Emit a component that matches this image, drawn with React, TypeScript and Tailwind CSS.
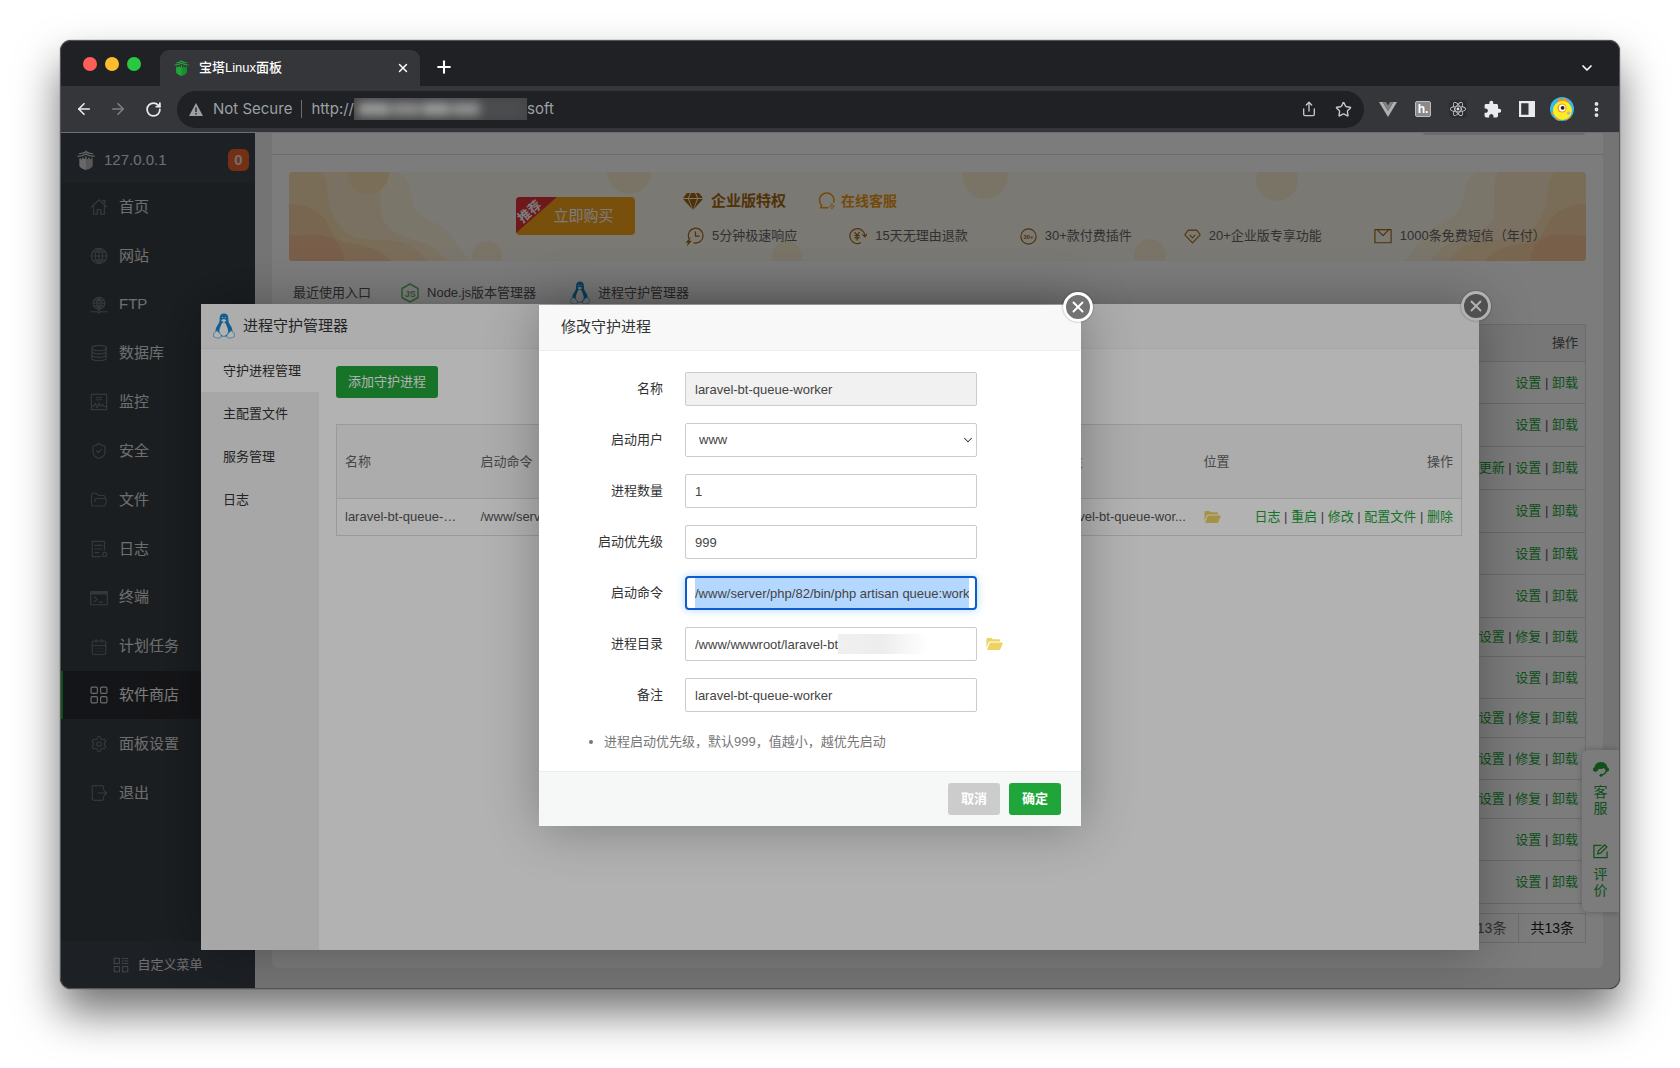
import React from "react";
import {
  ArrowLeft,
  ArrowRight,
  CalendarDays,
  ChevronDown,
  EllipsisVertical,
  FolderOpen,
  Plus,
  RotateCw,
  Settings,
  Share,
  ShieldCheck,
  Star,
  X,
} from "lucide-react";
import { MdExtension } from "react-icons/md";
import { FaReact } from "react-icons/fa";

type IconProps = { className?: string };

function PagodaIcon({ className }: IconProps) {
  return (
    <svg viewBox="0 0 20 22" className={className} fill="currentColor" aria-hidden="true">
      <path d="M10 0l.7 1.2C12.300 2.300 15 3.200 18 3.400v1.100C14.500 4.400 12 3.600 10 2.600 8 3.600 5.500 4.400 2 4.500V3.400C5 3.200 7.700 2.300 9.300 1.200z" />
      <path d="M10 3.600c2.600 1.500 5.600 2.500 9.700 2.700v1.200C15.500 7.300 12.500 6.400 10 5.100 7.500 6.400 4.500 7.300.300 7.500V6.300C4.400 6.100 7.400 5.100 10 3.600z" />
      <path d="M2.600 9h1.800v1.200h1.400V8.600h2v1.200h1.300V7.400l.9-.7.9.7v2.400h1.300V8.600h2v1.600h1.400V9h1.800v8c0 2-3.500 4-7.400 5-3.900-1-7.400-3-7.400-5z" />
      <path d="M10 8v14c3.900-1 7.400-3 7.400-5V9.500z" fill="#000" opacity=".14" />
    </svg>
  );
}

function PenguinIcon({ className }: IconProps) {
  return (
    <svg viewBox="0 0 22 26" className={className} aria-hidden="true">
      <path
        d="M11 .4c-2.900 0-4.300 2-4.300 4.700 0 2.500.1 3.800-1.500 6.200C3.600 13.600 2.300 16 2.500 19l4 4.500h9l4-4.500c.2-3-1.200-5.400-2.800-7.700-1.400-2.200-1.400-3.700-1.400-6.200 0-2.700-1.400-4.700-4.300-4.700z"
        fill="#1789cc"
      />
      <path
        d="M10.700 9.200c-1.500 0-2 1.400-2.800 3.300-.8 2-1.700 3.900-1.600 6.100.1 2.500 2 4.400 4.500 4.400s4.200-2 4.300-4.400c.1-2.200-.8-4.100-1.600-6.100-.7-1.800-1.200-3.300-2.800-3.300z"
        fill="#fff"
      />
      <path d="M8.200 7.100l2.700-1 2.400 1-.7 1.300-1.700.7-1.900-.8z" fill="#fff" />
      <circle cx="9.500" cy="4.600" r=".6" fill="#fff" />
      <circle cx="12.300" cy="4.600" r=".6" fill="#fff" />
      <path
        d="M4 17.600l3.600 3.600c1.200 1.400.6 3.600-1.400 3.900-2 .2-3.600-.8-5.300-1.200-.6-.3-.4-1.100-.2-1.900.1-1-.3-1.700.4-2.100 1.200-.5 1.600-1.600 2.900-2.300zM18 17.600l-3.600 3.600c-1.200 1.400-.6 3.600 1.400 3.900 2 .2 3.600-.8 5.300-1.200.6-.3.400-1.100.2-1.900-.1-1 .3-1.700-.4-2.100-1.200-.5-1.600-1.600-2.900-2.300z"
        fill="#fff"
        stroke="#1789cc"
        strokeWidth=".6"
      />
    </svg>
  );
}

function FolderIcon({ className }: IconProps) {
  return (
    <svg viewBox="0 0 17 14" className={className} fill="#eed262" aria-hidden="true">
      <path d="M.5 2.200C.5 1.500 1 1 1.700 1h3.600l1.400 1.300h6.100c.7 0 1.200.5 1.200 1.100v1H4.300c-.8 0-1.400.4-1.700 1.100L.5 11z" />
      <path d="M3.600 6.200c.2-.5.500-.8 1.100-.8h11.500c.4 0 .7.400.5.900l-2.400 6c-.2.500-.5.700-1 .7H1.600c-.4 0-.6-.3-.4-.8z" />
    </svg>
  );
}

function Line({ className, children }: IconProps & { children: React.ReactNode }) {
  return (
    <svg
      viewBox="0 0 20 20"
      className={className}
      fill="none"
      stroke="currentColor"
      strokeWidth="1.3"
      strokeLinecap="round"
      strokeLinejoin="round"
      aria-hidden="true"
    >
      {children}
    </svg>
  );
}

const icon = "size-[18px]";

const menu: { label: string; icon: React.ReactNode; active?: boolean }[] = [
  {
    label: "首页",
    icon: (
      <Line className={icon}>
        <path d="M1.500 10L10 2l8.500 8M4 8.500V18h4v-5h4v5h4V8.500M14 3h2.500v3" />
      </Line>
    ),
  },
  {
    label: "网站",
    icon: (
      <Line className={icon}>
        <circle cx="10" cy="10" r="8.500" />
        <path d="M10 1.500v17M1.500 10h17M3 5.500h14M3 14.500h14M10 1.500c-5.500 4-5.500 13 0 17 5.500-4 5.500-13 0-17z" />
      </Line>
    ),
  },
  {
    label: "FTP",
    icon: (
      <Line className={icon}>
        <circle cx="10" cy="8" r="6.500" />
        <path d="M10 1.500c-4 3.500-4 9.500 0 13 4-3.500 4-9.500 0-13zM10 1.500v13M3.500 8h13M4.500 5h11M4.500 11h11M.8 17.500h7M12.200 17.500h7" />
        <circle cx="10" cy="17.300" r="1.500" />
      </Line>
    ),
  },
  {
    label: "数据库",
    icon: (
      <Line className={icon}>
        <ellipse cx="10" cy="4.500" rx="8" ry="3" />
        <path d="M2 4.500v11c0 1.700 3.600 3 8 3s8-1.300 8-3v-11M2 8c0 1.700 3.600 3 8 3s8-1.300 8-3M2 11.800c0 1.700 3.600 3 8 3s8-1.300 8-3" />
      </Line>
    ),
  },
  {
    label: "监控",
    icon: (
      <Line className={icon}>
        <path d="M1.500 1.500h17v17h-17zM7 5h6M7 7.500h6M2 14.500h2.500l1.500-3 2 5 2-5.500 1.500 3.500h1l1.500-2 1.500 2.500H18" />
      </Line>
    ),
  },
  { label: "安全", icon: <ShieldCheck className={icon} strokeWidth={1.6} /> },
  { label: "文件", icon: <FolderOpen className={icon} strokeWidth={1.5} /> },
  {
    label: "日志",
    icon: (
      <Line className={icon}>
        <path d="M16 11V1.500H2.500v17H12M5.500 6h7.500M5.500 10h7.500M5.500 14H10" />
        <circle cx="16.300" cy="16" r="2.300" />
      </Line>
    ),
  },
  {
    label: "终端",
    icon: (
      <Line className={icon}>
        <path d="M.8 3h18.400v14.500H.8zM.8 4.200h18.400M.8 5.500h18.400M5 9l3 2.500L5 14M10 14.500h4" />
      </Line>
    ),
  },
  { label: "计划任务", icon: <CalendarDays className={icon} strokeWidth={1.5} /> },
  {
    label: "软件商店",
    active: true,
    icon: (
      <Line className={icon}>
        <rect x="1.200" y="1.200" width="7" height="7" rx="1.200" />
        <rect x="11.800" y="1.200" width="7" height="7" rx="1.200" />
        <rect x="1.200" y="11.800" width="7" height="7" rx="1.200" />
        <rect x="11.800" y="11.800" width="7" height="7" rx="1.200" />
      </Line>
    ),
  },
  { label: "面板设置", icon: <Settings className={icon} strokeWidth={1.5} /> },
  {
    label: "退出",
    icon: (
      <Line className={icon}>
        <path d="M15 6V3.500C15 2.500 14 1.800 13 1.800H4.500c-1 0-2 .7-2 1.700v13c0 1 1 1.700 2 1.700H13c1 0 2-.7 2-1.700V14M9.500 10h9M16 7.500l2.500 2.500-2.500 2.500" />
      </Line>
    ),
  },
];

function TabStrip() {
  return (
    <div className="flex h-[45px] items-end bg-[#202124]">
      <div className="flex h-full w-[99px] items-center gap-2 pl-[22px]">
        <button aria-label="关闭窗口" className="size-[14px] rounded-full bg-[#ff5f57]" />
        <button aria-label="最小化" className="size-[14px] rounded-full bg-[#febc2e]" />
        <button aria-label="最大化" className="size-[14px] rounded-full bg-[#28c840]" />
      </div>
      <div className="flex h-9 w-[260px] items-center rounded-t-[9px] bg-[#35363a] pr-[10px] pl-[14px]">
        <PagodaIcon className="h-4 w-[15px] text-[#20a53a]" />
        <span className="ml-[10px] flex-1 text-[13px] font-medium text-white">宝塔Linux面板</span>
        <button aria-label="关闭标签页" className="text-white">
          <X className="size-[14px]" strokeWidth={2.5} />
        </button>
      </div>
      <button aria-label="新标签页" className="mb-[9px] ml-[14px] text-white">
        <Plus className="size-5" strokeWidth={2.5} />
      </button>
      <button aria-label="搜索标签页" className="mr-6 mb-[10px] ml-auto text-white">
        <ChevronDown className="size-4" strokeWidth={2.5} />
      </button>
    </div>
  );
}

function Toolbar() {
  return (
    <div className="flex h-[47px] items-center border-b border-[#6d6e70] bg-[#35363a] pl-[14px] text-[#e8eaed]">
      <button aria-label="后退">
        <ArrowLeft className="size-[18px]" strokeWidth={2.2} />
      </button>
      <button aria-label="前进" className="ml-4 text-[#7d7e81]">
        <ArrowRight className="size-[18px]" strokeWidth={2.2} />
      </button>
      <button aria-label="重新加载" className="ml-[18px]">
        <RotateCw className="size-[17px]" strokeWidth={2.5} />
      </button>
      <div className="ml-[15px] flex h-[37px] flex-1 items-center rounded-full bg-[#202124] px-3 font-[Inter,'Noto_Sans_CJK_SC',sans-serif] text-[15px] text-[#9aa0a6]">
        <svg viewBox="0 0 14 13" className="h-[13px] w-[14px]" aria-hidden="true">
          <path d="M7 0l7 13H0z" fill="#9aa0a6" />
          <path d="M6.300 4.500h1.400V9H6.300zM6.300 10h1.400v1.400H6.300z" fill="#202124" />
        </svg>
        <span className="ml-[10px]">Not Secure</span>
        <span className="mx-[9px] h-[18px] w-px bg-[#6b6d70]" />
        <span>http://</span>
        <span className="h-[22px] w-[173px] overflow-hidden bg-[#454648]">
          <span className="flex h-full items-center gap-0.5 blur-[5px]">
            <span className="ml-1 h-[14px] w-8 bg-[#999999]" />
            <span className="h-[14px] w-7 bg-[#8a8a8a]" />
            <span className="h-[14px] w-7 bg-[#999999]" />
            <span className="h-[14px] w-7 bg-[#8f8f8f]" />
            <span className="h-[14px] w-10 bg-[#4c4e4f]" />
          </span>
        </span>
        <span className="flex-1">soft</span>
        <button aria-label="分享" className="text-[#c4c7c5]">
          <Share className="size-4" />
        </button>
        <button aria-label="收藏" className="ml-[18px] text-[#c4c7c5]">
          <Star className="size-[17px]" />
        </button>
      </div>
      <div className="flex items-center pr-[13px]">
        <button aria-label="Vue" className="ml-[15px]">
          <svg viewBox="0 0 18 15" className="h-[15px] w-[18px]" aria-hidden="true">
            <path d="M0 0h3.600L9 9l5.400-9H18L9 15z" fill="#b0b0b0" />
            <path d="M3.600 0H7l2 3.400L11 0h3.400L9 9z" fill="#808080" />
          </svg>
        </button>
        <button
          aria-label="h."
          className="ml-[18px] flex size-4 items-center justify-center rounded-xs border border-[#bbbbbb] bg-[#8a8a8a] text-xs font-bold text-white"
        >
          h.
        </button>
        <button aria-label="React" className="ml-[18px] rounded-sm bg-[#2c2d30] p-px text-[#e0e0e0]">
          <FaReact className="size-4" />
        </button>
        <button aria-label="扩展程序" className="ml-4">
          <MdExtension className="size-[19px]" />
        </button>
        <button aria-label="侧边栏" className="ml-[17px]">
          <svg viewBox="0 0 16 16" className="size-4" aria-hidden="true">
            <path d="M0 0h16v16H0zM2.200 2.200v11.600h7.300V2.200z" fill="#e8eaed" fillRule="evenodd" />
          </svg>
        </button>
        <button aria-label="个人资料" className="ml-[15px]">
          <svg viewBox="0 0 24 24" className="size-6" aria-hidden="true">
            <clipPath id="avatar">
              <circle cx="12" cy="12" r="12" />
            </clipPath>
            <g clipPath="url(#avatar)">
              <path d="M0 0h24v24H0z" fill="#35b8ea" />
              <path d="M8 4l1-3 3 2 3-2.500L17 4l3 1-2 3H7zM1 17l3-5 3 6z" fill="#f7931e" />
              <ellipse cx="12.500" cy="13.500" rx="9.500" ry="9.500" fill="#fcee21" />
              <path d="M7 20l3 4H4zM18 21l3-2-1 5h-5z" fill="#f7931e" />
              <circle cx="12" cy="11" r="4.600" fill="#f7931e" />
              <circle cx="12.200" cy="11" r="3.400" fill="#fff" />
              <circle cx="12.600" cy="10.800" r="1.900" fill="#222" />
              <circle cx="18.500" cy="16" r="1.800" fill="#b8bfa0" />
            </g>
          </svg>
        </button>
        <button aria-label="更多" className="ml-[13px]">
          <EllipsisVertical className="size-[19px]" strokeWidth={2.8} />
        </button>
      </div>
    </div>
  );
}

function Sidebar() {
  return (
    <aside className="flex w-[194px] shrink-0 flex-col bg-[#383f44] text-[#e3e3e3]">
      <div className="flex h-[50px] items-center bg-[#3d444d] pr-[6px] pl-4 text-[15px]">
        <PagodaIcon className="mt-1 h-[22px] w-[18px] text-[#d6d6d6]" />
        <span className="ml-[9px] flex-1 pt-1">127.0.0.1</span>
        <span className="mt-1 flex h-[22px] w-[21px] items-center justify-center rounded-md bg-[#f0642a] font-bold">0</span>
      </div>
      <nav className="grid h-[634px] auto-rows-fr gap-px text-[15px]">
        {menu.map((item) => (
          <a
            key={item.label}
            href="#"
            className={
              item.active
                ? "flex items-center border-l-2 border-[#20a53a] bg-[#2c2d33] pl-[27px] text-white"
                : "flex items-center border-l-2 border-transparent pl-[27px]"
            }
          >
            <span className={item.active ? "text-[#dddddd]" : "text-[#6f757a]"}>{item.icon}</span>
            <span className="ml-[11px]">{item.label}</span>
          </a>
        ))}
      </nav>
      <button className="mt-auto flex h-[47px] items-center justify-center bg-[#3d444d] text-[13px]">
        <span className="text-[#8b9196]">
          <Line className="size-4">
            <path d="M1.500 1.500H8V8H1.500zM1.500 12H8v6.500H1.500zM12 12h6.500v6.500H12zM11.500 2h1.500M15 2h3.500M11.500 5h1.500M15 5h3.500M11.500 8h1.500M15 8h3.500" />
          </Line>
        </span>
        <span className="ml-2">自定义菜单</span>
      </button>
    </aside>
  );
}

function Wave({ className }: IconProps) {
  return (
    <svg viewBox="0 0 190 89" className={className} aria-hidden="true">
      <path d="M0 0h108c10 4 12 12 14 22 2 14 8 24 24 29 16 6 20 24 36 38H0z" fill="#fdf2dc" />
      <path d="M0 0h88c6 8 2 30 5 44 6 18 28 22 44 28 12 5 14 12 20 17H0z" fill="#fceacb" />
      <path d="M0 0h30c10 6 8 20 10 30 4 18 14 32 30 36 24 4 44-2 60 14l8 9H0z" fill="#fbe0b7" />
      <path d="M0 32c14 0 26 4 36 15 7 9 5 20 22 24 20 2 34 6 44 18H0z" fill="#f9d1a6" />
      <path d="M0 63c12 2 20-2 36 1 16 4 18 15 20 25H0z" fill="#f8c39a" />
    </svg>
  );
}

function PromoBanner() {
  const perks: { label: string; icon: React.ReactNode }[] = [
    {
      label: "5分钟极速响应",
      icon: (
        <Line className="size-[19px]">
          <path d="M4 12A7.800 7.800 0 1 1 9.500 16.700M11 5v4.500h4" />
          <path d="M5.500 11.500L.8 16.300h2.700L2 20l5-5.200H4.500z" fill="currentColor" strokeWidth=".3" />
        </Line>
      ),
    },
    {
      label: "15天无理由退款",
      icon: (
        <Line className="size-[18px]">
          <path d="M13 17.500A8.300 8.300 0 1 1 17.500 9M15.300 8.500l2.300 2.500 2-2.800M6.500 6L9 9l2.500-3M9 9v5.500M6.500 9.500h5M6.500 12h5" />
        </Line>
      ),
    },
    {
      label: "30+款付费插件",
      icon: (
        <svg viewBox="0 0 20 20" className="size-[17px]" aria-hidden="true">
          <circle cx="10" cy="10" r="9" fill="none" stroke="currentColor" strokeWidth="1.300" />
          <text x="10" y="12.500" textAnchor="middle" fontSize="7" fontWeight="bold" fill="currentColor">
            30+
          </text>
        </svg>
      ),
    },
    {
      label: "20+企业版专享功能",
      icon: (
        <Line className="size-[17px]">
          <path d="M5 2.500h10l4 5.500-9 9.500L1 8zM7 8.500l3 3 3-3" />
        </Line>
      ),
    },
    {
      label: "1000条免费短信（年付）",
      icon: (
        <Line className="size-[18px]">
          <path d="M1 3h18v14.500H1zM3.500 3l6.500 6.500L16.500 3" />
        </Line>
      ),
    },
  ];
  return (
    <section className="relative mt-[17px] h-[89px] overflow-hidden rounded-sm bg-[#fdf9ef]">
      <Wave className="absolute top-0 left-0 h-[89px] w-[190px]" />
      <Wave className="absolute top-0 right-0 h-[89px] w-[190px] -scale-x-100" />
      <svg className="absolute inset-0 size-full" aria-hidden="true" fill="#fbf0d4">
        <circle cx="79" cy="1" r="21" fill="#fbe2b8" />
        <circle cx="198" cy="84" r="15" />
        <circle cx="340" cy="0" r="22" />
        <circle cx="498" cy="84" r="15" />
        <circle cx="696" cy="4" r="23" />
        <circle cx="861" cy="83" r="16" />
        <circle cx="988" cy="8" r="21" />
      </svg>
      <div className="relative flex h-full pt-[19px] pl-[227px]">
        <button className="relative mt-[6px] h-[38px] w-[119px] shrink-0 rounded-sm bg-[#f7a51a] pl-2 text-[15px] text-white">
          <span className="absolute top-0 left-0 h-9 w-[41px] rounded-tl-sm bg-[#e2333b] [clip-path:polygon(0_0,100%_0,0_100%)]" />
          <span className="absolute top-[5px] left-px -rotate-40 text-[13px] leading-5 font-bold">推荐</span>
          <span className="pl-[8px]">立即购买</span>
        </button>
        <div className="ml-12">
          <div className="flex h-5 items-center font-bold">
            <svg viewBox="0 0 20 17" className="h-[17px] w-5 text-[#a5670f]" fill="currentColor" aria-hidden="true">
              <path d="M4 0h3L5 5H0zM8 0h4l2 5H6zM13 0h3l4 5h-5zM0 6h5l4 10zM6 6h8l-4 11zM15 6h5l-9 10z" />
            </svg>
            <span className="ml-2 text-[15px] text-[#a5670f]">企业版特权</span>
            <a href="#" className="ml-8 flex items-center text-sm text-[#ef9a13]">
              <Line className="size-[18px]">
                <path d="M11 17.500H3l1-2.700A8 8 0 1 1 17.500 11" strokeWidth="1.700" />
                <path d="M15.500 13l.9 2.100 2.100.9-2.100.9-.9 2.100-.9-2.100-2.100-.9 2.100-.9z" strokeWidth=".8" />
              </Line>
              <span className="ml-[5px]">在线客服</span>
            </a>
          </div>
          <ul className="mt-[15px] flex gap-[52px] pl-[2px] text-[13px] whitespace-nowrap text-[#666666]">
            {perks.map((perk) => (
              <li key={perk.label} className="flex h-5 items-center gap-2">
                <span className="text-[#a5670f]">{perk.icon}</span>
                {perk.label}
              </li>
            ))}
          </ul>
        </div>
      </div>
    </section>
  );
}

function Actions({ items }: { items: string[] }) {
  return (
    <>
      {items.map((item, index) => (
        <React.Fragment key={item}>
          {index > 0 && " | "}
          <a href="#" className="text-[#20a53a]">
            {item}
          </a>
        </React.Fragment>
      ))}
    </>
  );
}

const plain = ["设置", "卸载"];
const repair = ["设置", "修复", "卸载"];
const softRows: { actions: string[]; height: string }[] = [
  { actions: plain, height: "h-[42px]" },
  { actions: plain, height: "h-[43px]" },
  { actions: ["更新", "设置", "卸载"], height: "h-[43px]" },
  { actions: plain, height: "h-[43px]" },
  { actions: plain, height: "h-[42px]" },
  { actions: plain, height: "h-[43px]" },
  { actions: repair, height: "h-[39px]" },
  { actions: plain, height: "h-[42px]" },
  { actions: repair, height: "h-[39px]" },
  { actions: repair, height: "h-[42px]" },
  { actions: repair, height: "h-[39px]" },
  { actions: plain, height: "h-[42px]" },
  { actions: plain, height: "h-[43px]" },
];

function SoftwareStore() {
  return (
    <main className="min-w-0 flex-1 bg-[#efefef] pr-4 pb-5 pl-[17px]">
      <div className="rounded-b-md bg-white px-[17px] pb-[25px]">
        <div className="-mx-[17px] flex h-[22px] items-start justify-end border-b border-[#dddddd] pr-[18px]">
          <div className="h-0.5 w-[162px] rounded-b-sm bg-[#dcdcdc]" />
        </div>
        <PromoBanner />
        <div className="mt-3 flex h-10 items-center pl-1 text-[13px] text-[#555555]">
          <span>最近使用入口</span>
          <a href="#" className="ml-[30px] flex items-center">
            <svg viewBox="0 0 18 20" className="h-5 w-[18px]" fill="none" aria-hidden="true">
              <path d="M9 1l8 4.500v9L9 19l-8-4.500v-9z" stroke="#67b867" strokeWidth="1.500" strokeLinejoin="round" />
              <text x="9.300" y="13.500" textAnchor="middle" fontSize="9" fontWeight="bold" fill="#67b867">
                JS
              </text>
            </svg>
            <span className="ml-2">Node.js版本管理器</span>
          </a>
          <a href="#" className="ml-[34px] flex items-center">
            <PenguinIcon className="h-6 w-5" />
            <span className="ml-2">进程守护管理器</span>
          </a>
        </div>
        <table className="mt-[11px] w-full border border-[#dddddd] text-right text-[13px] text-[#555555]">
          <thead>
            <tr className="h-[37px] bg-[#f5f5f5]">
              <th className="pr-[7px] font-normal">操作</th>
            </tr>
          </thead>
          <tbody>
            {softRows.map((row, index) => (
              <tr key={index} className={`border-t border-[#dddddd] ${row.height}`}>
                <td className="pr-[7px]">
                  <Actions items={row.actions} />
                </td>
              </tr>
            ))}
          </tbody>
        </table>
        <div className="mt-[9px] flex justify-end text-sm text-[#666666]">
          <div className="flex h-[30px] items-center border border-[#dddddd]">
            <span className="px-3">从1-13条</span>
            <span className="flex h-full items-center border-l border-[#dddddd] px-[11px] text-[#222222]">共13条</span>
          </div>
        </div>
      </div>
    </main>
  );
}

function ServiceDock() {
  return (
    <div className="absolute top-[617px] right-0 flex h-[162px] w-[37px] flex-col items-center rounded-l-md bg-white text-sm leading-4 text-[#20a53a] shadow-[0_0_6px_rgba(0,0,0,0.25)]">
      <button className="mt-[12px] flex w-4 flex-col items-center">
        <svg viewBox="0 0 16 15" className="h-[15px] w-4" fill="currentColor" aria-hidden="true">
          <path d="M8 0C4.400 0 2 2.200 1.700 5.200.700 5.500 0 6.300 0 7.500S.9 9.800 2 9.800h1.300c.7-.3 2-1.600 2.400-3 2 .6 4 .2 5-.9.8.5 1.600 1.500 1.900 2.900-.6 2-2.200 3.400-4.400 3.400v1.300c2.500 0 4.700-1.200 5.600-3.700H14c1.100 0 2-1 2-2.300 0-1.200-.7-2-1.700-2.300C14 2.200 11.600 0 8 0z" />
          <circle cx="8" cy="13.300" r="1.500" />
        </svg>
        <span className="mt-[7px] w-[14px]">客服</span>
      </button>
      <button className="mt-7 flex w-4 flex-col items-center">
        <svg viewBox="0 0 16 16" className="size-[15px]" fill="none" stroke="currentColor" strokeWidth="1.300" aria-hidden="true">
          <path d="M9 1.500H1v13h14V8M5 10.500l.8-3.200L12.500 1l2.300 2.200L8 9.800z" />
        </svg>
        <span className="mt-[7px] w-[14px]">评价</span>
      </button>
    </div>
  );
}

function CloseButton() {
  return (
    <button
      aria-label="关闭"
      className="absolute -top-[13px] -right-3 flex size-[30px] items-center justify-center rounded-full border-[3px] border-white bg-[#737373] text-white shadow-[0_0_2px_rgba(0,0,0,0.4)]"
    >
      <X className="size-[18px]" strokeWidth={2.5} />
    </button>
  );
}

function DaemonManager() {
  const tabs = ["守护进程管理", "主配置文件", "服务管理", "日志"];
  return (
    <section className="absolute inset-x-[140px] top-[171px] bottom-[38px] flex flex-col bg-white text-[13px] text-[#333333] shadow-[1px_1px_50px_rgba(0,0,0,0.3)]">
      <header className="flex h-[45px] shrink-0 items-center border-b border-[#eeeeee] bg-[#f8f8f8] pl-3">
        <PenguinIcon className="h-[26px] w-[22px]" />
        <h2 className="ml-2 text-[15px]">进程守护管理器</h2>
      </header>
      <CloseButton />
      <div className="flex flex-1">
        <nav className="w-[118px] shrink-0 bg-[#f0f0f1]">
          {tabs.map((tab, index) => (
            <a
              key={tab}
              href="#"
              className={index === 0 ? "flex h-[43px] items-center bg-white pl-[22px]" : "flex h-[43px] items-center pl-[22px]"}
            >
              {tab}
            </a>
          ))}
        </nav>
        <div className="min-w-0 flex-1 px-[17px] pt-[17px]">
          <button className="h-8 w-[102px] rounded-[3px] bg-[#20a53a] text-white">添加守护进程</button>
          <table className="mt-[26px] w-full table-fixed border border-[#dddddd] text-left text-[#555555]">
            <colgroup>
              <col className="w-[136px]" />
              <col />
              <col className="w-[147px]" />
              <col className="w-[48px]" />
              <col className="w-[218px]" />
            </colgroup>
            <thead>
              <tr className="h-[74px] bg-[#f6f6f6] text-[#666666]">
                <th className="px-2 font-normal">名称</th>
                <th className="px-2 font-normal">启动命令</th>
                <th className="px-2 font-normal">备注</th>
                <th className="px-2 font-normal">位置</th>
                <th className="px-2 text-right font-normal">操作</th>
              </tr>
            </thead>
            <tbody>
              <tr className="h-[37px] border-t border-[#dddddd]">
                <td className="px-2">laravel-bt-queue-…</td>
                <td className="px-2">/www/server/php</td>
                <td className="px-2 whitespace-nowrap">laravel-bt-queue-wor...</td>
                <td className="px-2">
                  <FolderIcon className="h-[14px] w-[17px]" />
                </td>
                <td className="px-2 text-right whitespace-nowrap">
                  <Actions items={["日志", "重启", "修改", "配置文件", "删除"]} />
                </td>
              </tr>
            </tbody>
          </table>
        </div>
      </div>
    </section>
  );
}

const field = "h-[34px] w-[292px] rounded-xs border border-[#cccccc] bg-white px-[9px] text-[13px] text-[#444444]";

function FormRow({ id, label, children }: { id: string; label: string; children: React.ReactNode }) {
  return (
    <div className="flex h-[34px] items-center">
      <label htmlFor={id} className="w-[124px] pr-[22px] text-right">
        {label}
      </label>
      {children}
    </div>
  );
}

function EditDaemonDialog() {
  return (
    <section className="absolute top-[172px] left-[478px] flex w-[542px] flex-col bg-white text-[13px] text-[#333333] shadow-[1px_1px_50px_rgba(0,0,0,0.3)]">
      <header className="flex h-[46px] items-center border-b border-[#eeeeee] bg-[#f8f8f8] pl-[22px]">
        <h2 className="text-[15px]">修改守护进程</h2>
      </header>
      <CloseButton />
      <form className="flex flex-col">
        <div className="flex flex-col gap-[17px] pt-[21px] pl-[22px]">
          <FormRow id="name" label="名称">
            <input
              id="name"
              readOnly
              defaultValue="laravel-bt-queue-worker"
              className="h-[34px] w-[292px] rounded-xs border border-[#cccccc] bg-[#f1f1f1] px-[9px] text-[13px] text-[#444444]"
            />
          </FormRow>
          <FormRow id="user" label="启动用户">
            <div className="relative">
              <select
                id="user"
                className="block h-[34px] w-[292px] appearance-none rounded-xs border border-[#cccccc] bg-white px-[13px] text-[13px] text-[#444444]"
              >
                <option>www</option>
              </select>
              <ChevronDown className="pointer-events-none absolute top-[10px] right-[2px] size-[14px]" strokeWidth={1.8} />
            </div>
          </FormRow>
          <FormRow id="count" label="进程数量">
            <input id="count" defaultValue="1" className={field} />
          </FormRow>
          <FormRow id="priority" label="启动优先级">
            <input id="priority" defaultValue="999" className={field} />
          </FormRow>
          <FormRow id="command" label="启动命令">
            <div className="rounded-sm bg-white shadow-[0_0_8px_rgba(102,175,233,0.5)]">
              <input
                id="command"
                defaultValue="/www/server/php/82/bin/php artisan queue:work"
                className="block h-[34px] w-[292px] rounded-sm border-2 border-[#0a5cd0] bg-[#b3d7ff] bg-clip-content pr-1.5 pl-2 text-[13px] text-[#444444] outline-none"
              />
            </div>
          </FormRow>
          <FormRow id="directory" label="进程目录">
            <div className="relative">
              <input id="directory" defaultValue="/www/wwwroot/laravel-bt" className={field} />
              <span className="absolute top-[7px] left-[153px] h-5 w-[90px] bg-gradient-to-r from-[#f0f0f0] via-[#ededed] to-white" />
            </div>
            <button type="button" aria-label="选择目录" className="ml-[9px]">
              <FolderIcon className="h-[14px] w-[17px]" />
            </button>
          </FormRow>
          <FormRow id="remark" label="备注">
            <input id="remark" defaultValue="laravel-bt-queue-worker" className={field} />
          </FormRow>
        </div>
        <ul className="mt-5 mb-[19px] list-disc pl-[65px] leading-5 text-[#777777]">
          <li>进程启动优先级，默认999，值越小，越优先启动</li>
        </ul>
        <footer className="flex h-[55px] items-center justify-end gap-[9px] border-t border-[#eaecec] bg-[#f6f8f8] pr-5 font-bold text-white">
          <button type="button" className="h-8 w-[52px] rounded-[3px] bg-[#cccccc]">
            取消
          </button>
          <button type="button" className="h-8 w-[52px] rounded-[3px] bg-[#20a53a]">
            确定
          </button>
        </footer>
      </form>
    </section>
  );
}

export default function App() {
  return (
    <div className="min-h-screen bg-white px-[60px] pt-10 pb-[79px] font-['Liberation_Sans','Noto_Sans_CJK_SC',sans-serif]">
      <div className="overflow-hidden rounded-[11px] border border-[#55565a] bg-[#202124] shadow-[0_0_1px_#000,0_24px_44px_rgba(0,0,0,0.55)]">
        <TabStrip />
        <Toolbar />
        <div className="relative flex overflow-hidden">
          <Sidebar />
          <SoftwareStore />
          <ServiceDock />
          <div className="absolute inset-0 bg-black/30" />
          <DaemonManager />
          <div className="absolute inset-0 bg-black/30" />
          <EditDaemonDialog />
        </div>
      </div>
    </div>
  );
}
